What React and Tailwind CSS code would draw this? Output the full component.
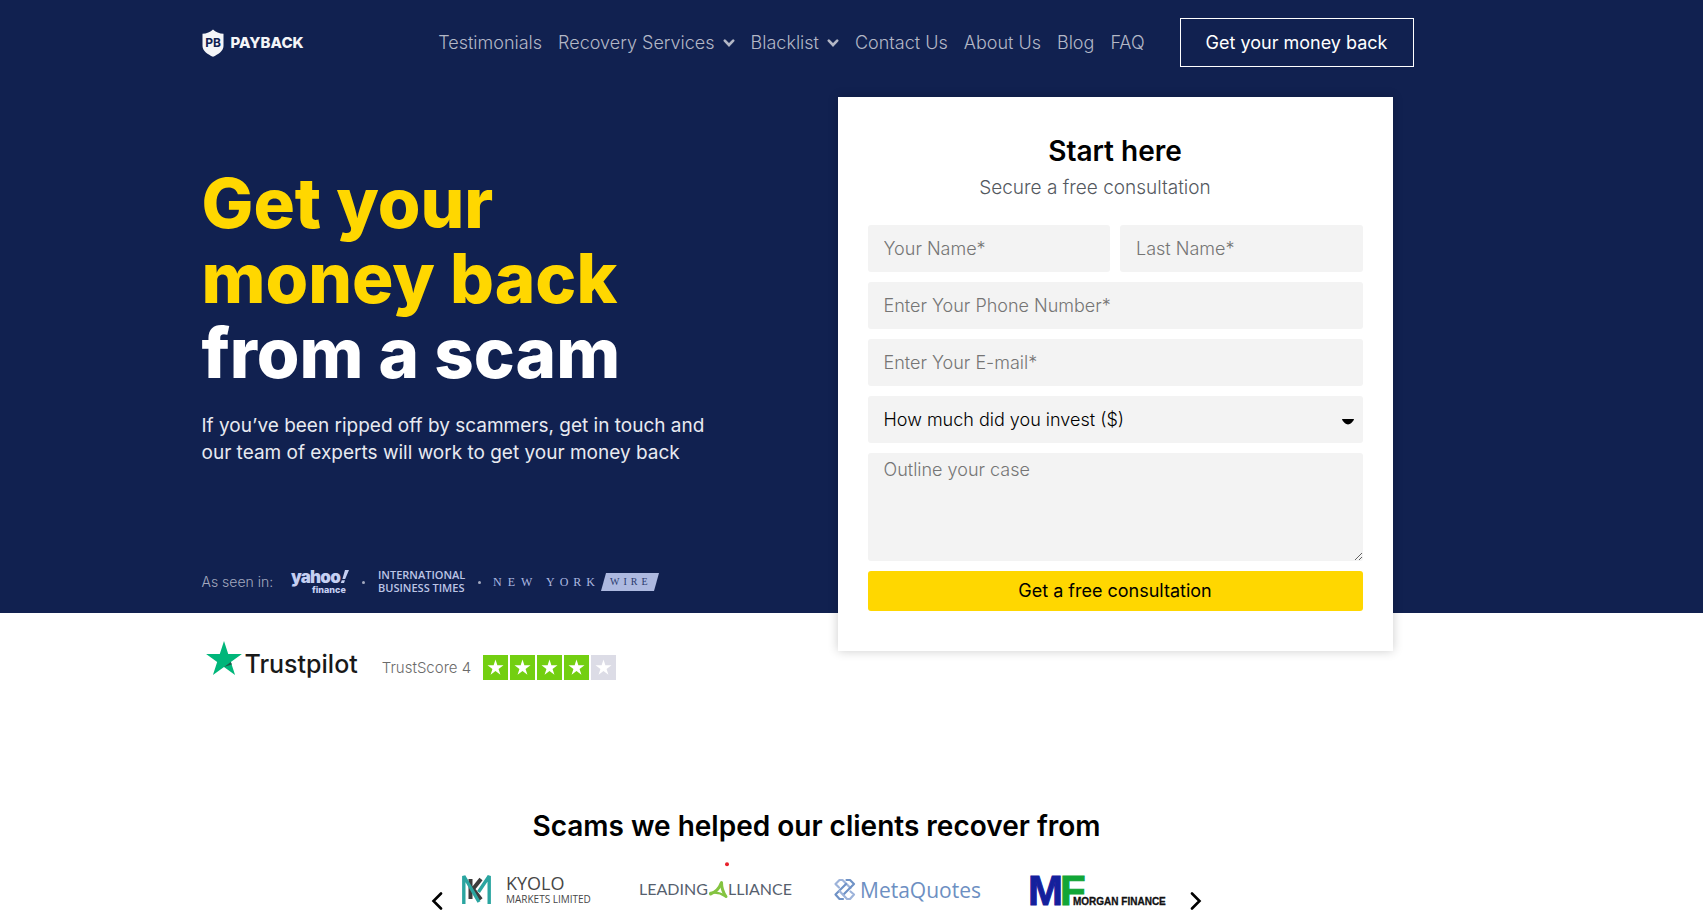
import React from "react";

const navItems = [
  { label: "Testimonials" },
  { label: "Recovery Services", menu: true },
  { label: "Blacklist", menu: true },
  { label: "Contact Us" },
  { label: "About Us" },
  { label: "Blog" },
  { label: "FAQ" },
];

const STAR = "M50 0 L61.8 36.2 L100 36.2 L69.1 58.6 L80.9 95 L50 72.5 L19.1 95 L30.9 58.6 L0 36.2 L38.2 36.2 Z";

function Chevron({ className }) {
  return (
    <svg viewBox="0 0 12 8" className={className} fill="none" stroke="currentColor" strokeWidth="2.6" aria-hidden="true">
      <path d="M1.8 1.6 L6 6 L10.2 1.6" strokeLinecap="round" />
    </svg>
  );
}

function Logo() {
  return (
    <a href="#" className="flex items-center gap-[7px] text-[#f4f5f8]" aria-label="Payback">
      <svg viewBox="0 0 22 28" className="h-7 w-[22px]" aria-hidden="true">
        <path d="M11 0.5 C13.5 3 17.5 4.6 21.5 4.8 V17 C21.5 22 16 25.5 11 27.8 C6 25.5 0.5 22 0.5 17 V4.8 C4.5 4.6 8.5 3 11 0.5 Z" fill="currentColor" />
        <text x="11" y="17.5" textAnchor="middle" fontSize="12" fontWeight="700" fontFamily="Inter, sans-serif" fill="#112150">PB</text>
      </svg>
      <span className="text-[15px] leading-5 font-extrabold">PAYBACK</span>
    </a>
  );
}

function Header() {
  return (
    <header className="flex items-center justify-between pt-[18px] pr-[88px]">
      <Logo />
      <div className="flex items-center gap-[35px]">
        <nav className="flex items-center gap-4 text-[18px] leading-6 font-light text-[#b3b7c6]">
          {navItems.map((item) => (
            <a key={item.label} href="#" className="flex items-center gap-2 whitespace-nowrap">
              {item.label}
              {item.menu && <Chevron className="h-2 w-3" />}
            </a>
          ))}
        </nav>
        <button type="button" className="h-[49px] border border-white px-[25px] text-[18px] leading-6 whitespace-nowrap text-white">
          Get your money back
        </button>
      </div>
    </header>
  );
}

function Press() {
  return (
    <div className="flex items-center text-[#bcc5e6]">
      <span className="mr-[18px] text-sm leading-5 font-light text-[#a3a9bf]">As seen in:</span>
      <svg viewBox="0 0 58 24" className="h-6 w-[58px] overflow-visible" fill="#c5cff2" fontFamily="Inter, sans-serif" role="img" aria-label="yahoo! finance">
        <text x="0" y="13" fontSize="17" fontWeight="900" letterSpacing="-0.8">yahoo</text>
        <path d="M54 0 L58 0 L54.2 9 L51.4 9 Z M50.8 10.3 h3.2 l-1 2.7 h-3.2 Z" />
        <text x="21" y="23" fontSize="9" fontWeight="800">finance</text>
      </svg>
      <span className="mx-[13px] size-[3px] rounded-full bg-[#a3a9bf]" />
      <svg viewBox="0 0 88 24" className="h-6 w-[88px] overflow-visible" fill="#bcc5e6" fontFamily="Open Sans, sans-serif" fontSize="11" fontWeight="600" role="img" aria-label="International Business Times">
        <text x="0" y="9">INTERNATIONAL</text>
        <text x="0" y="22">BUSINESS TIMES</text>
      </svg>
      <span className="mx-3 size-[3px] rounded-full bg-[#a3a9bf]" />
      <svg viewBox="0 0 166 24" className="h-6 w-[166px] overflow-visible" fontFamily="Liberation Serif, serif" role="img" aria-label="New York Wire">
        <text x="0" y="16" fontSize="12" letterSpacing="6" fill="#adb9e0">NEW</text>
        <text x="53" y="16" fontSize="12" letterSpacing="5" fill="#adb9e0">YORK</text>
        <path d="M113 3 H166 L161 21 H108 Z" fill="#adb9e0" />
        <text x="117" y="15" fontSize="10" letterSpacing="4" fill="#2a3a6e">WIRE</text>
      </svg>
    </div>
  );
}

const field = "w-full rounded-[3px] bg-[#f3f3f3] px-4 text-[18px] leading-6 font-light text-black placeholder:text-[#757575] placeholder:opacity-100";

function ConsultForm() {
  return (
    <form className="w-[555px] shrink-0 bg-white px-[30px] pt-9 pb-10 shadow-[0_0_10px_0_rgba(0,0,0,0.2)]">
      <h2 className="text-center text-[28px] leading-9 font-semibold text-black">Start here</h2>
      <p className="mt-[5px] mr-10 mb-[23px] text-center text-[19px] leading-7 font-light text-[#54595f]">Secure a free consultation</p>
      <div className="grid grid-cols-2 gap-[10px]">
        <input aria-label="Your Name" placeholder="Your Name*" className={`${field} h-[47px]`} />
        <input aria-label="Last Name" placeholder="Last Name*" className={`${field} h-[47px]`} />
        <input aria-label="Phone" type="tel" placeholder="Enter Your Phone Number*" className={`${field} col-span-2 h-[47px]`} />
        <input aria-label="E-mail" type="email" placeholder="Enter Your E-mail*" className={`${field} col-span-2 h-[47px]`} />
        <div className="relative col-span-2">
          <select aria-label="How much did you invest" className={`${field} block h-[47px] appearance-none`}>
            <option>How much did you invest ($)</option>
          </select>
          <svg viewBox="0 0 12 6" className="pointer-events-none absolute top-[23px] right-[9px] h-[6px] w-3" aria-hidden="true">
            <path d="M0 0 H12 C11.5 2.5 8 5.5 6 5.5 C4 5.5 0.5 2.5 0 0 Z" fill="#000" />
          </svg>
        </div>
        <textarea aria-label="Outline your case" placeholder="Outline your case" className={`${field} col-span-2 block h-[108px] py-[5px]`} />
        <button type="button" className="col-span-2 h-10 rounded-[3px] bg-[#ffd700] text-[18px] leading-6 text-black">
          Get a free consultation
        </button>
      </div>
    </form>
  );
}

function Trust() {
  return (
    <div className="flex items-end pl-1">
      <svg viewBox="0 0 100 95" className="mb-[5px] h-[34px] w-9" aria-hidden="true">
        <path d={STAR} fill="#00b67a" />
        <path d="M72 66 L69.1 58.6 L50 72.5 Z" fill="#1f5a4a" />
      </svg>
      <span className="ml-[3px] text-[25px] leading-8 font-medium text-[#191919]">Trustpilot</span>
      <span className="ml-6 text-[15px] leading-6 font-light text-[#6b6b6b]">TrustScore 4</span>
      <span className="ml-3 flex gap-[2px]">
        {[1, 2, 3, 4, 5].map((n) => (
          <svg key={n} viewBox="0 0 25 25" className="size-[25px]" aria-hidden="true">
            <rect width="25" height="25" fill={n < 5 ? "#73cf11" : "#dcdce6"} />
            <path d={STAR} transform="translate(4.5 4.5) scale(.16)" fill="#fff" />
          </svg>
        ))}
      </span>
    </div>
  );
}

function KyoloLogo() {
  return (
    <svg viewBox="0 0 132 48" className="h-12 w-[132px] overflow-visible" role="img" aria-label="Kyolo Markets Limited">
      <path d="M9.5 17 V37 M20 17 L12 27 L20 37.5" fill="none" stroke="#3d3d3d" strokeWidth="4" />
      <path d="M2.8 42 V14 L18 40" fill="none" stroke="#2aa5a0" strokeWidth="3.4" strokeLinejoin="bevel" />
      <path d="M28.2 42 V14 L17.5 30" fill="none" stroke="#2aa5a0" strokeWidth="3.4" strokeLinejoin="bevel" />
      <g fontFamily="Open Sans, sans-serif" fill="#474747">
        <text x="45" y="28" fontSize="18">KYOLO</text>
        <text x="45" y="41" fontSize="10">MARKETS LIMITED</text>
      </g>
    </svg>
  );
}

function AllianceLogo() {
  return (
    <svg viewBox="0 0 153 48" className="h-12 w-[153px] overflow-visible" role="img" aria-label="Leading Alliance">
      <circle cx="88" cy="2.2" r="2" fill="#e8202a" />
      <g fontFamily="Lato, sans-serif" fontSize="16" fill="#56606e">
        <text x="0" y="33">LEADING</text>
        <text x="89" y="33">LLIANCE</text>
      </g>
      <g fill="none" stroke="#84c441" strokeLinecap="round">
        <path d="M82.5 20.5 C82.5 26 84.5 31 87 34.5" strokeWidth="3" />
        <path d="M82 21.5 C80.5 26 76.5 30 71.5 32" strokeWidth="3" />
        <path d="M71.5 31 C77 30 82.5 31.5 86 34" strokeWidth="2.4" />
      </g>
    </svg>
  );
}

function MetaQuotesLogo() {
  return (
    <svg viewBox="4 0 149 48" className="h-12 w-[149px] overflow-visible" role="img" aria-label="MetaQuotes">
      <g fill="none" strokeWidth="2.2" strokeLinecap="round" strokeLinejoin="round">
        <path d="M5 25.5 L1.5 22 L5.5 18 H8.5 L16.5 26" stroke="#9db3da" />
        <path d="M12.5 18 H16 L20 22 L9.5 32.5" stroke="#6f92c6" />
        <path d="M12 22 L1.5 32.5 L5.5 37 H9" stroke="#6f92c6" />
        <path d="M5.5 29 L13 37 H16 L20 32.5 L16.5 29.5" stroke="#9db3da" />
      </g>
      <text x="26" y="36" fontSize="21" fontWeight="500" fontFamily="Open Sans, sans-serif" fill="#6d8fc2">MetaQuotes</text>
    </svg>
  );
}

function MorganLogo() {
  return (
    <svg viewBox="0 0 139 48" className="h-12 w-[139px] overflow-visible" fontFamily="Liberation Sans, sans-serif" fontWeight="700" role="img" aria-label="Morgan Finance">
      <text x="-5" y="43" fontSize="42" fill="#14209c" stroke="#14209c" strokeWidth="1">M</text>
      <text x="27" y="43" fontSize="42" fill="#12a637" stroke="#12a637" strokeWidth="1">F</text>
      <text x="40" y="43" fontSize="10" fill="#111" stroke="#111" strokeWidth="0.3">MORGAN FINANCE</text>
    </svg>
  );
}

function Arrow({ label, d }) {
  return (
    <button type="button" aria-label={label} className="text-black">
      <svg viewBox="0 0 12 18" className="h-[18px] w-3" fill="none" stroke="currentColor" strokeWidth="2.6" strokeLinecap="round" aria-hidden="true">
        <path d={d} />
      </svg>
    </button>
  );
}

function Clients() {
  return (
    <section className="w-full max-w-[1230px]">
      <h2 className="text-center text-[28px] leading-9 font-semibold text-black">Scams we helped our clients recover from</h2>
      <div className="mt-[18px] flex items-end justify-center gap-[18px]">
        <Arrow label="Previous" d="M10 1.5 L2.5 9 L10 16.5" />
        <div className="flex w-[711px] items-start justify-between">
          <KyoloLogo />
          <AllianceLogo />
          <MetaQuotesLogo />
          <MorganLogo />
        </div>
        <Arrow label="Next" d="M2 1.5 L9.5 9 L2 16.5" />
      </div>
    </section>
  );
}

export default function App() {
  return (
    <div className="min-h-screen overflow-x-hidden bg-white font-[Inter,sans-serif]">
      <div className="flow-root bg-[#112150]">
        <div className="mx-auto flex max-w-[1300px] flex-col">
          <Header />
          <div className="mt-[30px] -mb-[38px] flex justify-between pr-[109px]">
            <div className="flex flex-col justify-between pt-[69px]">
              <div>
                <h1 className="text-[69px] leading-[75px] font-extrabold text-white">
                  <span className="text-[#ffd700]">Get your<br />money back</span><br />from a scam
                </h1>
                <p className="mt-[21px] text-[19px] leading-[27px] text-[#e8eaf0]">
                  If you’ve been ripped off by scammers, get in touch and<br />our team of experts will work to get your money back
                </p>
              </div>
              <div className="mb-[57px]"><Press /></div>
            </div>
            <ConsultForm />
          </div>
        </div>
      </div>
      <div className="mx-auto max-w-[1300px] pt-7">
        <Trust />
        <div className="mt-32"><Clients /></div>
      </div>
    </div>
  );
}
